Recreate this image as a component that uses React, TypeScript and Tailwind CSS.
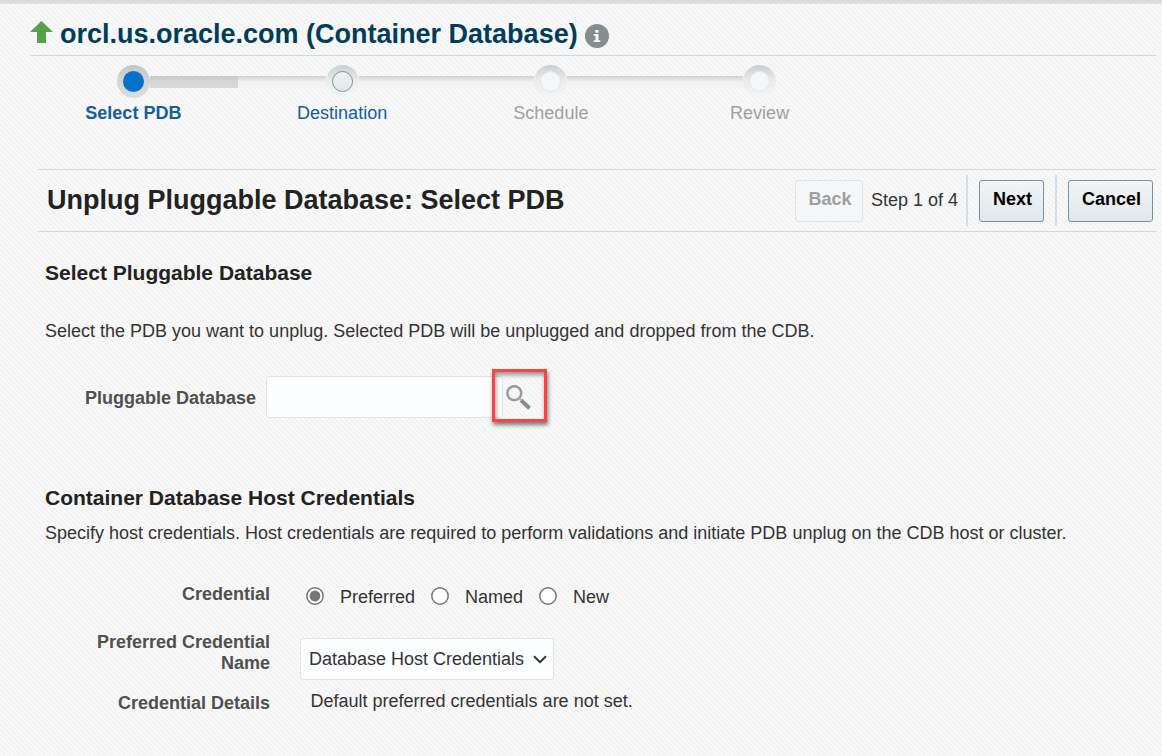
import type { ReactNode } from "react";

type StepState = "current" | "next" | "disabled";

const steps: { label: string; state: StepState }[] = [
  { label: "Select PDB", state: "current" },
  { label: "Destination", state: "next" },
  { label: "Schedule", state: "disabled" },
  { label: "Review", state: "disabled" },
];

const ringClass: Record<StepState, string> = {
  current: "bg-linear-to-b from-[#c3c7c8] via-[#d5d5d5] to-[#dcdcdc]",
  next: "bg-linear-to-b from-[#cbcfd1] via-[#eceded] to-[#f5f5f5]",
  disabled: "bg-linear-to-b from-[#cbcfd1] via-[#eceded] to-[#f5f5f5]",
};

const dotClass: Record<StepState, string> = {
  current: "bg-[#0572ce]",
  next: "border border-[#7790a2] bg-linear-to-b from-[#f0f3f4] to-[#e3e7ea]",
  disabled: "border border-[#e2e7ec] bg-[#f4f6f8]",
};

const labelClass: Record<StepState, string> = {
  current: "font-bold text-[#145c9e]",
  next: "text-[#145c9e]",
  disabled: "text-[#9f9f9f]",
};

const lightTrack = "bg-linear-to-b from-[#cdd1d0] via-[#e4e4e4] via-30% to-[#f3f3f3] to-50%";
const darkTrack = "bg-linear-to-b from-[#c6cac9] via-[#d5d5d5] via-40% to-[#d9d9d9]";

function Track({ kind }: { kind: "none" | "light" | "dark" }) {
  const tone = kind === "none" ? "" : kind === "dark" ? darkTrack : lightTrack;
  return <div className={`mt-[11px] h-3 flex-1 ${tone}`} />;
}

function Train() {
  return (
    <ol className="ml-[29px] grid h-[113px] w-[835px] grid-cols-4 pt-[9px]">
      {steps.map((s, i) => (
        <li key={s.label} className="flex flex-col">
          <div className="flex h-[33px]">
            <Track kind={i === 0 ? "none" : "light"} />
            <div className={`flex size-[33px] items-center justify-center rounded-full ${ringClass[s.state]}`}>
              <div className={`size-[21px] rounded-full ${dotClass[s.state]}`} />
            </div>
            <Track kind={i === 0 ? "dark" : i === 3 ? "none" : "light"} />
          </div>
          <span className={`mt-[5px] text-center text-[18px] leading-[21px] ${labelClass[s.state]}`}>{s.label}</span>
        </li>
      ))}
    </ol>
  );
}

function Field({ label, children, className }: { label: ReactNode; children: ReactNode; className: string }) {
  return (
    <div className={`flex ${className}`}>
      <div className="w-[225px] text-right text-[18px] leading-[21px] font-bold text-[#4f4f4f]">{label}</div>
      {children}
    </div>
  );
}

function Radio({ label, checked, className }: { label: string; checked?: boolean; className: string }) {
  return (
    <label className={`flex items-center ${className}`}>
      <svg className="mr-[16px] size-[18px] shrink-0" viewBox="0 0 18 18">
        <circle cx="9" cy="9" r="8.2" fill="#fff" stroke="#767676" strokeWidth="1.5" />
        {checked && <circle cx="9" cy="9" r="5.4" fill="#767676" />}
      </svg>
      <span className="pt-1">{label}</span>
    </label>
  );
}

export default function App() {
  return (
    <main className="h-[756px] w-[1162px] overflow-hidden bg-[#f6f6f6] bg-[linear-gradient(45deg,#f3f3f3_25%,#fafafa_25%,#fafafa_50%,#f3f3f3_50%,#f3f3f3_75%,#fafafa_75%)] bg-size-[5px_5px] font-['Liberation_Sans',Arial,sans-serif] text-[18px] whitespace-nowrap text-[#333333]">
      <div className="h-1 bg-linear-to-b from-[#d9d9d9] to-[#e1e1e1]" />
      <header className="mr-[6px] ml-[30px] flex h-[52px] border-b border-[#d0dae2]">
        <svg className="mt-[17px] mr-[7px] h-[22px] w-[23px]" viewBox="0 0 23 22">
          <path d="M11.5 0L23 11H16V22H7V11H0Z" fill="#53a148" />
        </svg>
        <h1 className="mt-[14px] w-[518px] text-[27px] leading-8 font-bold text-[#003d5b]">orcl.us.oracle.com (Container Database)</h1>
        <svg className="mt-5 ml-[7px] size-6" viewBox="0 0 24 24">
          <circle cx="12" cy="12" r="12" fill="#878c8f" />
          <path d="M10.3 6h3.2v2.8h-3.2zM8.7 10h4.8v6.2h1.8V18H8.7v-1.8h1.8v-4.4H8.7z" fill="#f6f6f6" />
        </svg>
      </header>
      <Train />
      <section className="mr-[6px] ml-[38px] flex h-[63px] justify-between border-y border-[#d0dae2]">
        <h2 className="mt-[14px] ml-[9px] text-[27px] leading-8 font-bold text-[#222]">Unplug Pluggable Database: Select PDB</h2>
        <div className="mr-[3px] flex pt-[5px]">
          <button className="mt-[5px] h-[42px] w-[68px] rounded-[3px] border border-[#dfe4e9] bg-[#f4f6f8] pb-1 pl-[2px] text-[18px] font-bold text-[#9f9f9f]">Back</button>
          <span className="mt-[15px] ml-2 w-[87px] leading-[21px]">Step 1 of 4</span>
          <span className="ml-2 h-[51px] w-0.5 bg-[#d5dfe7]" />
          <button className="mt-[5px] ml-[11px] h-[42px] w-[65px] rounded-[3px] border border-[#7790a2] bg-linear-to-b from-[#f2f4f5] to-[#e3e7ea] pb-1 pl-[2px] text-[18px] font-bold text-black">Next</button>
          <span className="ml-[11px] h-[51px] w-0.5 bg-[#d5dfe7]" />
          <button className="mt-[5px] ml-[11px] h-[42px] w-[85px] rounded-[3px] border border-[#7790a2] bg-linear-to-b from-[#f2f4f5] to-[#e3e7ea] pb-1 pl-[2px] text-[18px] font-bold text-black">Cancel</button>
        </div>
      </section>
      <section className="ml-[45px] pt-[29px]">
        <h3 className="text-[21px] leading-6 font-bold text-[#222]">Select Pluggable Database</h3>
        <p className="mt-[36px] leading-[21px]">Select the PDB you want to unplug. Selected PDB will be unplugged and dropped from the CDB.</p>
        <div className="mt-[27px] flex h-[53px]">
          <label className="mt-[19px] w-[211px] text-right leading-[21px] font-bold text-[#4f4f4f]">Pluggable Database</label>
          <div className="mt-[7px] ml-[10px] h-[42px] w-[237px] rounded-[3px] border border-[#dfe4e7] bg-[#fcfdfe]" />
          <div className="relative -ml-[11px] h-[53px] w-[55px] border-[3px] border-[#fb4343] shadow-[1px_3px_4px_rgba(0,0,0,0.5),inset_1px_3px_4px_rgba(0,0,0,0.4)]">
            <svg className="mt-[13px] ml-[11px] size-[25px]" viewBox="0 0 25 25" fill="none">
              <circle cx="8.3" cy="8.2" r="7" stroke="#999da0" strokeWidth="2.5" />
              <path d="M15 15.2L23.5 23.3" stroke="#878b8e" strokeWidth="4" />
              <path d="M13 13.2L15.5 15.5" stroke="#aeb1b3" strokeWidth="2" />
            </svg>
          </div>
        </div>
      </section>
      <section className="ml-[45px] pt-[64px]">
        <h3 className="text-[21px] leading-6 font-bold text-[#222]">Container Database Host Credentials</h3>
        <p className="mt-[13px] leading-[21px]">Specify host credentials. Host credentials are required to perform validations and initiate PDB unplug on the CDB host or cluster.</p>
        <Field label="Credential" className="mt-[40px] h-12">
          <div className="mt-[1px] ml-9 flex h-[21px]">
            <Radio label="Preferred" checked className="w-[125px]" />
            <Radio label="Named" className="w-[108px]" />
            <Radio label="New" className="" />
          </div>
        </Field>
        <Field label={<>Preferred Credential<br />Name</>} className="h-[61px]">
          <div className="mt-[6px] ml-[30px] flex h-[42px] w-[254px] items-center justify-between rounded-[3px] border border-[#dfe4e7] bg-[#fcfdfe] pr-[6px] pl-2">
            <span>Database Host Credentials</span>
            <svg className="h-[9px] w-[14px]" viewBox="0 0 14 9" fill="none">
              <path d="M1 1.2L7 7.2L13 1.2" stroke="#333" strokeWidth="2" />
            </svg>
          </div>
        </Field>
        <Field label="Credential Details" className="">
          <span className="-mt-[2px] ml-[40.5px] leading-[21px]">Default preferred credentials are not set.</span>
        </Field>
      </section>
    </main>
  );
}
